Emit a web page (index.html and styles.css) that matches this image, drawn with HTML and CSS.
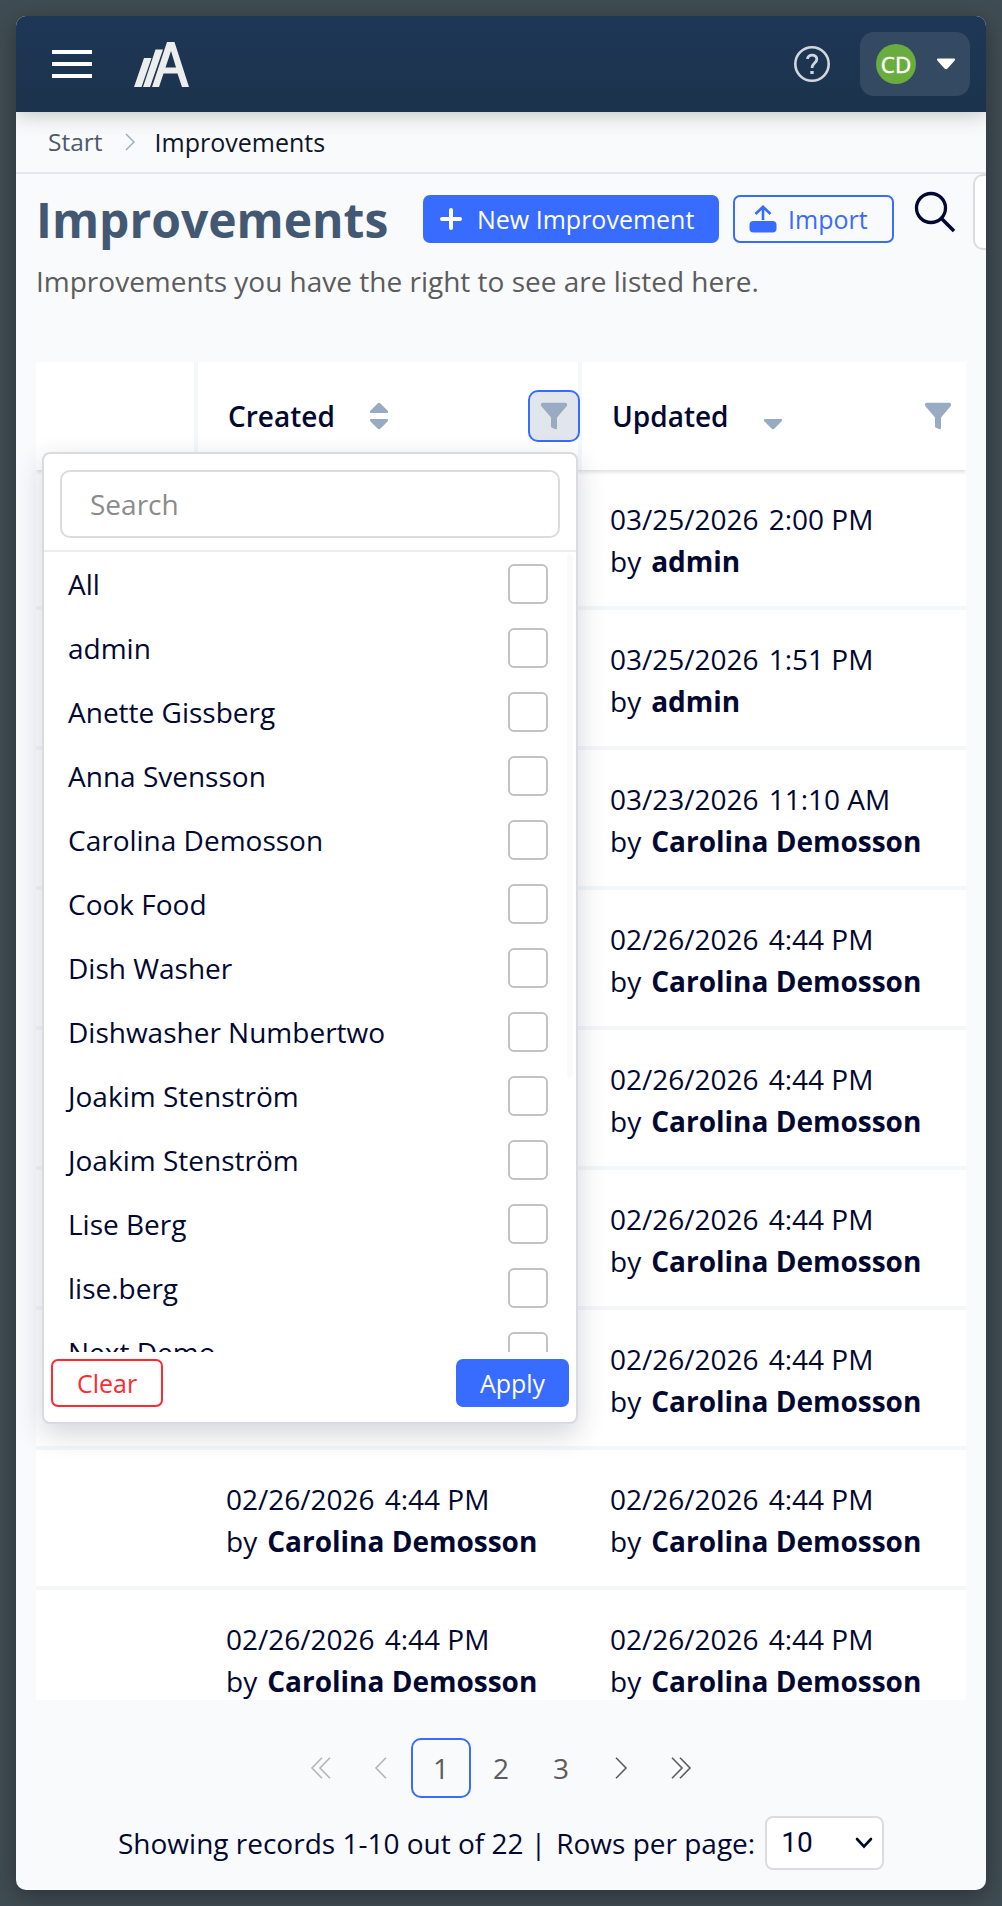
FILE: index.html
```html
<!DOCTYPE html>
<html lang="en">
<head>
    <meta charset="UTF-8">
    <meta name="viewport" content="width=device-width, initial-scale=1.0">
    <title>Improvements</title>
    <link rel="stylesheet" href="styles.css">
</head>
<body>
    <div class="app">
        <header class="topbar">
            <button class="menu-btn" aria-label="Menu"><span></span><span></span><span></span></button>
            <svg class="logo" width="56" height="46" viewBox="0 0 56 46">
                <path fill="#ededed" fill-rule="evenodd" d="M0 45L10 16H17.500L7.500 45ZM9 45L21.500 7.500H29L16 45ZM18 45L33 0H40.500L55 45H48L43.500 31.500H29.500L25 45ZM31.500 25.500H42L37 9Z"/>
            </svg>
            <div class="topbar-right">
                <svg class="help" width="36" height="36" viewBox="0 0 36 36" fill="none" stroke="#d2d6dd">
                    <circle cx="18" cy="18" r="16.700" stroke-width="2.600"/>
                    <path d="M13.500 13C13.500 7.800 22.800 7.800 22.800 13.200C22.800 17 18 17.300 18 22" stroke-width="2.800"/>
                    <path d="M16.300 26.500H19.700" stroke-width="3.200"/>
                </svg>
                <div class="user-menu">
                    <span class="avatar">CD</span>
                    <svg width="20" height="12" viewBox="0 0 20 12"><path fill="#fff" d="M2 .5H18Q20 1 18.500 2.800L11.500 10.500Q10 12 8.500 10.500L1.500 2.800Q0 1 2 .5Z"/></svg>
                </div>
            </div>
        </header>

        <nav class="breadcrumb">
            <span class="crumb">Start</span>
            <svg width="10" height="18" viewBox="0 0 10 18" fill="none" stroke="#98acc4" stroke-width="1.400"><path d="M1 1L9 9L1 17"/></svg>
            <span class="crumb-current">Improvements</span>
        </nav>

        <div class="page-head">
            <h1>Improvements</h1>
            <button class="btn btn-primary btn-new">
                <svg width="24" height="24" viewBox="0 0 24 24" stroke="#fff" stroke-width="4" stroke-linecap="round"><path d="M12 3V21M3 12H21"/></svg>
                New Improvement
            </button>
            <button class="btn btn-outline btn-import">
                <svg width="28" height="28" viewBox="0 0 28 28" fill="none" stroke="#386bff" stroke-width="2.600">
                    <path d="M14 15V2M6.500 9L14 1.800L21.500 9"/>
                    <rect x="0.500" y="16" width="27" height="11.500" rx="4" fill="#386bff" stroke="none"/>
                </svg>
                Import
            </button>
            <svg class="search-icon" width="42" height="42" viewBox="0 0 42 42" fill="none" stroke="#020830" stroke-width="3.300">
                <circle cx="17" cy="17" r="14.500"/><path d="M27.500 27.500L40 40" stroke-width="3.600"/>
            </svg>
            <input class="page-search" type="text">
        </div>
        <p class="description">Improvements you have the right to see are listed here.</p>

        <div class="table">
            <div class="thead">
                <div class="th"></div>
                <div class="th">
                    <span>Created</span>
                    <svg class="sort" width="20" height="28" viewBox="0 0 20 28" fill="#98abc3"><path d="M8.500 1.500Q10 .2 11.500 1.500L18.500 8.500Q20 11 18 11H2Q0 11 1.500 8.500ZM8.500 26.500Q10 27.800 11.500 26.500L18.500 19.500Q20 17 18 17H2Q0 17 1.500 19.500Z"/></svg>
                    <button class="filter-btn active" aria-label="Filter created">
                        <svg width="28" height="28" viewBox="0 0 28 28" fill="#98abc3"><path d="M2.500 .7H25.500Q28 1.500 26.800 4L17 15.500V26Q17 27.500 15.500 27.200L12 25.800Q11 25.500 11 24.500V15.500L1.200 4Q0 1.500 2.500 .7Z"/></svg>
                    </button>
                </div>
                <div class="th">
                    <span>Updated</span>
                    <svg class="sort" width="20" height="28" viewBox="0 0 20 28" fill="#98abc3"><path d="M8.500 26.500Q10 27.800 11.500 26.500L18.500 19.500Q20 17 18 17H2Q0 17 1.500 19.500Z"/></svg>
                    <button class="filter-btn" aria-label="Filter updated">
                        <svg width="28" height="28" viewBox="0 0 28 28" fill="#98abc3"><path d="M2.500 .7H25.500Q28 1.500 26.800 4L17 15.500V26Q17 27.500 15.500 27.200L12 25.800Q11 25.500 11 24.500V15.500L1.200 4Q0 1.500 2.500 .7Z"/></svg>
                    </button>
                </div>
            </div>
            <div class="tbody">
                <div class="tr"><div class="td"></div><div class="td"></div><div class="td"><span class="date">03/25/2026</span>2:00 PM<br><span class="by">by</span><b>admin</b></div></div>
                <div class="tr"><div class="td"></div><div class="td"></div><div class="td"><span class="date">03/25/2026</span>1:51 PM<br><span class="by">by</span><b>admin</b></div></div>
                <div class="tr"><div class="td"></div><div class="td"></div><div class="td"><span class="date">03/23/2026</span>11:10 AM<br><span class="by">by</span><b>Carolina Demosson</b></div></div>
                <div class="tr"><div class="td"></div><div class="td"></div><div class="td"><span class="date">02/26/2026</span>4:44 PM<br><span class="by">by</span><b>Carolina Demosson</b></div></div>
                <div class="tr"><div class="td"></div><div class="td"></div><div class="td"><span class="date">02/26/2026</span>4:44 PM<br><span class="by">by</span><b>Carolina Demosson</b></div></div>
                <div class="tr"><div class="td"></div><div class="td"></div><div class="td"><span class="date">02/26/2026</span>4:44 PM<br><span class="by">by</span><b>Carolina Demosson</b></div></div>
                <div class="tr"><div class="td"></div><div class="td"></div><div class="td"><span class="date">02/26/2026</span>4:44 PM<br><span class="by">by</span><b>Carolina Demosson</b></div></div>
                <div class="tr"><div class="td"></div><div class="td"><span class="date">02/26/2026</span>4:44 PM<br><span class="by">by</span><b>Carolina Demosson</b></div><div class="td"><span class="date">02/26/2026</span>4:44 PM<br><span class="by">by</span><b>Carolina Demosson</b></div></div>
                <div class="tr"><div class="td"></div><div class="td"><span class="date">02/26/2026</span>4:44 PM<br><span class="by">by</span><b>Carolina Demosson</b></div><div class="td"><span class="date">02/26/2026</span>4:44 PM<br><span class="by">by</span><b>Carolina Demosson</b></div></div>
            </div>
        </div>

        <!-- Filter dropdown for the Created column -->
        <div class="filter-panel">
            <div class="filter-search"><input type="text" placeholder="Search"></div>
            <div class="filter-list">
                <label>All<input type="checkbox"></label>
                <label>admin<input type="checkbox"></label>
                <label>Anette Gissberg<input type="checkbox"></label>
                <label>Anna Svensson<input type="checkbox"></label>
                <label>Carolina Demosson<input type="checkbox"></label>
                <label>Cook Food<input type="checkbox"></label>
                <label>Dish Washer<input type="checkbox"></label>
                <label>Dishwasher Numbertwo<input type="checkbox"></label>
                <label>Joakim Stenström<input type="checkbox"></label>
                <label>Joakim Stenström<input type="checkbox"></label>
                <label>Lise Berg<input type="checkbox"></label>
                <label>lise.berg<input type="checkbox"></label>
                <label>Next Demo<input type="checkbox"></label>
                <span class="scroll-thumb"></span>
            </div>
            <div class="filter-actions">
                <button class="btn btn-clear">Clear</button>
                <button class="btn btn-primary btn-apply">Apply</button>
            </div>
        </div>

        <div class="pagination">
            <span class="page disabled"><svg width="22" height="22" viewBox="0 0 22 22"><path d="M12 .7L2 11L12 21.300M20 .7L10 11L20 21.300"/></svg></span>
            <span class="page disabled"><svg width="22" height="22" viewBox="0 0 22 22"><path d="M16 .7L6 11L16 21.300"/></svg></span>
            <span class="page current">1</span>
            <span class="page">2</span>
            <span class="page">3</span>
            <span class="page"><svg width="22" height="22" viewBox="0 0 22 22"><path d="M6 .7L16 11L6 21.300"/></svg></span>
            <span class="page"><svg width="22" height="22" viewBox="0 0 22 22"><path d="M2 .7L12 11L2 21.300M10 .7L20 11L10 21.300"/></svg></span>
        </div>
        <div class="records">
            <span class="records-count">Showing records 1-10 out of 22 |</span>
            <span class="records-label">Rows per page:</span>
            <div class="rows-select">
                10
                <svg width="18" height="12" viewBox="0 0 18 12" fill="none" stroke="#020830" stroke-width="2.600"><path d="M2 2L9 9.500L16 2" stroke-linecap="round"/></svg>
            </div>
        </div>
    </div>
</body>
</html>
```
FILE: styles.css
```css
* {
    box-sizing: border-box;
}

body {
    margin: 0;
    height: 1906px;
    padding: 16px;
    overflow: hidden;
    background-color: #404c53;
    font-family: "Open Sans", sans-serif;
    font-size: 28px;
    line-height: 42px;
    color: #020830;
}

button, input {
    font-family: inherit;
}

.app {
    position: relative;
    display: flex;
    flex-direction: column;
    width: 970px;
    height: 1874px;
    background: #f9fafc;
    border-radius: 10px;
    overflow: hidden;
    box-shadow: 0 6px 24px rgba(0, 0, 0, 0.35);
}

/* Top bar */
.topbar {
    position: relative;
    display: flex;
    align-items: center;
    height: 96px;
    flex-shrink: 0;
    padding: 0 16px 0 36px;
    background: linear-gradient(#1e3756, #1b334c);
    box-shadow: 0 2px 20px rgba(60, 60, 40, 0.3);
}

.menu-btn {
    display: flex;
    flex-direction: column;
    gap: 8px;
    width: 40px;
    padding: 0;
    border: none;
    background: none;
}

.menu-btn span {
    height: 4px;
    background: #fff;
}

.logo {
    margin: 2px 0 0 42px;
}

.topbar-right {
    display: flex;
    align-items: center;
    margin-left: auto;
    gap: 30px;
}

.user-menu {
    display: flex;
    align-items: center;
    justify-content: space-between;
    width: 110px;
    height: 64px;
    padding: 0 14px 0 16px;
    border-radius: 14px;
    background: #344962;
}

.avatar {
    width: 40px;
    height: 40px;
    border-radius: 50%;
    background: #69ad3e;
    color: #fff;
    font-size: 22.4px;
    -webkit-text-stroke: 0.5px #fff;
    line-height: 41px;
    text-align: center;
}

/* Breadcrumb */
.breadcrumb {
    display: flex;
    align-items: center;
    height: 62px;
    flex-shrink: 0;
    padding: 0 32px;
    border-bottom: 2px solid #e4e6e9;
    font-size: 24.5px;
}

.crumb {
    color: #4f5969;
}

.crumb-current {
    color: #0e1527;
    font-size: 25px;
}

.breadcrumb svg {
    margin: 0 20px 0 22px;
}

/* Page heading */
.page-head {
    display: flex;
    height: 76px;
    flex-shrink: 0;
    padding-left: 20px;
}

h1 {
    width: 387px;
    flex-shrink: 0;
    margin: 11px 0 0;
    font-size: 48px;
    line-height: 70px;
    color: #425873;
}

.btn {
    display: flex;
    align-items: center;
    justify-content: center;
    height: 48px;
    flex-shrink: 0;
    padding: 0;
    border: 2px solid #386bff;
    border-radius: 7px;
    font-size: 25px;
    line-height: 36px;
}

.btn-primary {
    background: #386bff;
    color: #fff;
}

.btn-outline {
    background: transparent;
    color: #386bff;
}

.btn-new {
    justify-content: flex-start;
    width: 296px;
    margin: 21px 14px 0 0;
    padding-left: 14px;
    gap: 14px;
}

.btn-import {
    justify-content: flex-start;
    width: 161px;
    margin: 21px 20px 0 0;
    padding-left: 14px;
    gap: 11px;
}

.search-icon {
    flex-shrink: 0;
    margin: 17px 17px 0 0;
}

.page-search {
    width: 320px;
    flex-shrink: 0;
    border: 2px solid #dcdcde;
    border-radius: 10px;
    background: #fff;
}

.description {
    height: 112px;
    flex-shrink: 0;
    margin: 0;
    padding: 10px 20px 0;
    color: #5c5c5c;
}

/* Table */
.table {
    height: 1338px;
    flex-shrink: 0;
    margin: 0 20px;
    overflow: hidden;
    background: #fff;
}

.thead, .tr {
    display: grid;
    grid-template-columns: 162px 384px 384px;
}

.thead {
    position: relative;
    height: 108px;
    background: #fff;
    box-shadow: 0 2px 4px rgba(0, 0, 0, 0.14);
}

.th {
    display: flex;
    align-items: center;
    padding-left: 30px;
    border-right: 4px solid #f3f8fc;
    font-weight: 600;
}

.th:last-child {
    border-right-color: #fff;
}

.sort {
    margin-left: 34px;
}

.filter-btn {
    display: flex;
    align-items: center;
    justify-content: center;
    position: relative;
    width: 52px;
    height: 52px;
    margin: 0 -2px 0 auto;
    padding: 0;
    border: 2px solid transparent;
    border-radius: 10px;
    background: none;
}

.filter-btn.active {
    border-color: #386bff;
    background: #e1e6ed;
}

.tr {
    height: 140px;
    border-bottom: 4px solid #f3f7fa;
}

.td {
    padding: 28px 0 0 28px;
    white-space: nowrap;
}

.date {
    margin-right: 10px;
}

.by {
    margin-right: 10px;
}

/* Filter dropdown */
.filter-panel {
    position: absolute;
    left: 26px;
    top: 436px;
    width: 536px;
    height: 972px;
    background: #fff;
    border: 2px solid #d9dae2;
    border-radius: 8px;
    box-shadow: 0 10px 28px rgba(40, 45, 70, 0.2);
}

.filter-search {
    height: 98px;
    padding: 16px;
    border-bottom: 2px solid #ebecf1;
}

.filter-search input {
    width: 500px;
    height: 68px;
    padding: 0 28px;
    border: 2px solid #dcdcde;
    border-radius: 10px;
    font-size: 28px;
}

.filter-search input::placeholder {
    color: #8b8b8b;
}

.filter-list {
    position: relative;
    height: 800px;
    overflow: hidden;
}

.filter-list label {
    display: flex;
    align-items: center;
    justify-content: space-between;
    height: 64px;
    padding: 0 28px 0 24px;
}

.filter-list input {
    appearance: none;
    width: 40px;
    height: 40px;
    margin: 0;
    border: 2px solid #c3c3c3;
    border-radius: 6px;
    background: #fff;
}

.scroll-thumb {
    position: absolute;
    top: 3px;
    right: 3px;
    width: 6px;
    height: 522px;
    border-radius: 3px;
    background: #fafafa;
}

.filter-actions {
    display: flex;
    justify-content: space-between;
    padding: 7px 7px 0;
}

.btn-clear {
    width: 112px;
    border-color: #ff2a2f;
    background: #fff;
    color: #ff2a2f;
}

.btn-apply {
    width: 113px;
}

/* Pagination */
.pagination {
    display: flex;
    justify-content: center;
    height: 60px;
    margin-top: 38px;
    color: #5c5c5c;
}

.page {
    display: flex;
    align-items: center;
    justify-content: center;
    width: 60px;
    height: 60px;
}

.page svg {
    fill: none;
    stroke: #5c5c5c;
    stroke-width: 1.6;
}

.page.disabled svg {
    stroke: #b5b5b5;
}

.page.current {
    border: 2px solid #386bff;
    border-radius: 10px;
}

.records {
    display: flex;
    align-items: center;
    height: 54px;
    margin-top: 18px;
    padding-left: 102px;
    white-space: nowrap;
}

.records-label {
    margin-left: 10px;
}

.rows-select {
    display: flex;
    align-items: center;
    justify-content: space-between;
    width: 119px;
    height: 54px;
    margin-left: 10px;
    padding: 0 9px 0 14px;
    border: 2px solid #dcdcde;
    border-radius: 8px;
    background: #fff;
    font-family: Roboto, sans-serif;
    font-size: 28px;
}
```
